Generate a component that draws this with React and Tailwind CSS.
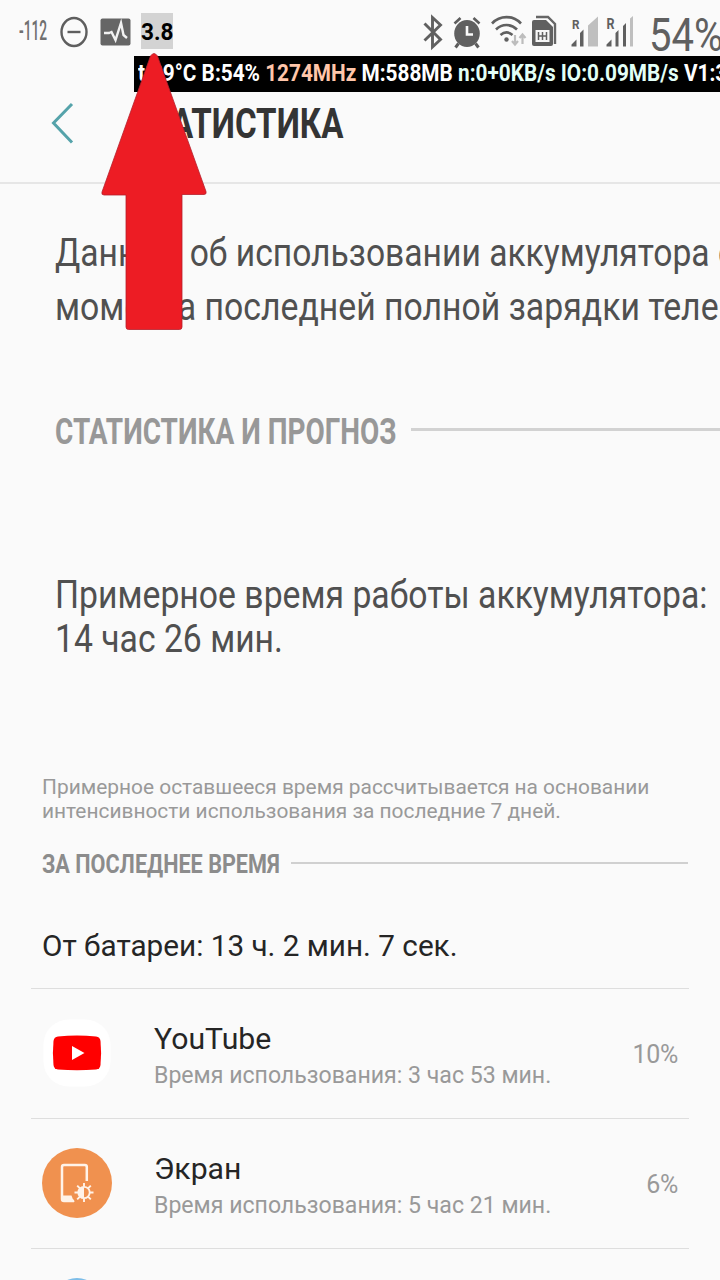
import React from "react";

function StatusIcons() {
  return (
    <div className="flex h-14 items-start">
      <span className="ml-[19px] mt-[17px] block w-[41px] shrink-0">
        <span className="inline-block origin-left scale-x-[0.51] whitespace-nowrap text-[27px] font-medium leading-[28px] text-[#707070]">-112</span>
      </span>
      <svg className="mt-[16px] h-8 w-7 shrink-0" viewBox="0 0 28 32" fill="none" stroke="#5e5e5e" strokeWidth="2.4">
        <ellipse cx="14" cy="16" rx="12.5" ry="14" />
        <path d="M7.5 16h13" />
      </svg>
      <svg className="ml-3 mt-[18px] h-7 w-[31px] shrink-0" viewBox="0 0 31 28">
        <rect x="0.5" y="0.5" width="30" height="27" rx="2" fill="#666" />
        <path d="M4 15h5l2.500-1 4 8 5.500-17 2.500 12 3.500 3" fill="none" stroke="#f2f2f2" strokeWidth="2.4" />
      </svg>
      <span className="ml-[10px] mt-[13px] flex h-9 w-8 shrink-0 items-center justify-center bg-[#d3d3d3]">
        <span className="mt-[2px] inline-block scale-x-[0.94] whitespace-nowrap text-[24px] font-bold text-black">3.8</span>
      </span>
      <svg className="ml-auto mt-[14px] h-[38px] w-[212px] shrink-0" viewBox="422 14 212 38" fill="none">
        <path d="M424.500 23.500l16 16-8 7.500V17.500l8 7.500-16 15.500" stroke="#606060" strokeWidth="2.9" />
        <path d="M454.5 23.500l6-5.500M479.500 23.500l-6-5.500" stroke="#5d5d5d" strokeWidth="2.600" />
        <path d="M458.500 43.500l-3 4M475.500 43.500l3 4" stroke="#5d5d5d" strokeWidth="3" />
        <ellipse cx="467" cy="33.500" rx="12.800" ry="13.500" fill="#606060" />
        <path d="M467 26v8.500h6" stroke="#fafafa" strokeWidth="2.600" />
        <path d="M492 23.500c8-8.500 21-8.500 29 0M496 29.500c6-6 15-6 21 0M500.500 35c4-3.500 8-3.500 12 0" stroke="#606060" strokeWidth="2.600" />
        <circle cx="506.500" cy="39.500" r="2.200" fill="#606060" />
        <path d="M515 35v9M512 41l3 3.500 3-3.500M522.500 44v-9M519.500 38l3-3.500 3 3.500" stroke="#bdbdbd" strokeWidth="2.200" />
        <path d="M536 17h12l7 7v20" stroke="#666" strokeWidth="2.400" />
        <path d="M534 20h12l7 7v17q0 2-2 2h-17q-2 0-2-2V22q0-2 2-2z" fill="#606060" />
        <path d="M535.500 30h14v12h-14z" fill="#f7f7f7" />
        <path d="M538.500 32v8M542.500 32v8M546.500 32v8M538 36h9" stroke="#606060" strokeWidth="1.500" />
        <path d="M571.500 46.500v-2l5-5v7zM580 33l3.500-3.500v17H580z" fill="#606060" />
        <path d="M588 25.500l10-9v30h-10z" fill="#bfbfbf" />
        <path d="M606.500 46.500v-2l5-5v7zM615.500 33l3-3v16.500h-3zM623 26l3-3v23.500h-3z" fill="#606060" />
        <path d="M630 18.500l3-2.500v30.500h-3z" fill="#bfbfbf" />
        <text x="572" y="29" fill="#606060" fontSize="13" fontWeight="700" textLength="7.500" lengthAdjust="spacingAndGlyphs">R</text>
        <text x="606.500" y="29" fill="#606060" fontSize="15" fontWeight="700" textLength="8" lengthAdjust="spacingAndGlyphs">R</text>
      </svg>
      <span className="ml-[15px] mt-[10px] w-[71px] shrink-0">
        <span className="inline-block origin-left scale-x-[0.87] whitespace-nowrap text-[46px] leading-[50px] text-[#606060]">54%</span>
      </span>
    </div>
  );
}

function ScreenIcon() {
  return (
    <svg className="h-[70px] w-[70px]" viewBox="0 0 70 70" fill="none">
      <circle cx="35" cy="35" r="35" fill="#f0914f" />
      <path d="M44.800 33V19q0-2-2-2H22q-2 0-2 2v32q0 2 2 2h10" stroke="#fff3e9" strokeWidth="2.500" />
      <path d="M20 47.500h9.500q.5 3 3.500 6H22q-2 0-2-2z" fill="#fff3e9" />
      <circle cx="42" cy="44.500" r="5.700" stroke="#fff3e9" strokeWidth="1.800" />
      <path d="M42 39v11a5.500 5.500 0 0 1 0-11z" fill="#fff3e9" />
      <path d="M42 35v3.500M42 50.500v3.500M32.500 44.500h3.500M48 44.500h3.500M35.200 37.700l2.500 2.500M46.300 48.800l2.500 2.500M35.200 51.300l2.500-2.500M46.300 40.200l2.500-2.500" stroke="#fff3e9" strokeWidth="1.900" />
    </svg>
  );
}

function YouTubeIcon() {
  return (
    <svg className="h-[70px] w-[70px]" viewBox="0 0 70 70">
      <rect x="1.500" y="1.500" width="67" height="67" rx="25" fill="#fff" />
      <path d="M16 18.500q19-1.800 38 0 4 .4 4.500 4.500 1.200 12 0 24-.5 4-4.500 4.500-19 1.600-38 0-4-.5-4.500-4.500-1.200-12 0-24 .5-4.100 4.500-4.500z" fill="red" />
      <path d="M30 28v14l12.500-7z" fill="#fff" />
    </svg>
  );
}

function UsageRow({ icon, name, detail, percent }) {
  return (
    <div className="ml-[31px] flex h-[130px] w-[658px] items-center border-b border-[#dedede] pr-[11px]">
      <div className="mb-[2px] ml-[11px] w-[112px] shrink-0">{icon}</div>
      <div className="mt-[6px] flex-1">
        <div className="whitespace-nowrap text-[30.2px] leading-[38px] text-[#252525]">{name}</div>
        <div className="whitespace-nowrap text-[23.1px] leading-[35px] text-[#999]">{detail}</div>
      </div>
      <div className="mt-[3px] text-[25px] tracking-[-0.3px] text-[#999]">{percent}</div>
    </div>
  );
}

export default function App() {
  return (
    <div className="relative h-[1280px] w-[720px] overflow-hidden bg-[#fafafa] font-['Roboto',sans-serif]">
      <StatusIcons />
      <div className="ml-[134px] h-[36px] overflow-hidden bg-black pl-[4px]">
        <div className="inline-block origin-left scale-x-[0.904] whitespace-nowrap text-[23px] font-bold leading-[36px] text-white">
          t:39°C B:54% <span className="text-[#ffc6aa]">1274MHz</span> M:588MB <span className="text-[#e2fff6]">n:0+0KB/s</span> <span className="text-[#e2fff6]">IO:0.09MB/s</span> V1:3
        </div>
      </div>
      <div className="flex h-[92px] items-start border-b-2 border-[#e6e6e6]">
        <svg className="ml-[51px] mt-[9px] h-[44px] w-[23px] shrink-0" viewBox="0 0 23 44" fill="none" stroke="#55a3aa" strokeWidth="3">
          <path d="M21 3L2.500 22 21 41.500" />
        </svg>
        <h1 className="ml-[57px] mt-[6px] origin-left scale-x-[0.77] whitespace-nowrap text-[43px] font-bold leading-[50px] text-[#343434]">СТАТИСТИКА</h1>
      </div>

      <div className="ml-[55px] mt-[42px] whitespace-nowrap text-[38px] leading-[54px] text-[#505050]">
        <div className="w-max origin-left scale-x-[0.885]">Данные об использовании аккумулятора с</div>
        <div className="w-max origin-left scale-x-[0.889]">момента последней полной зарядки теле</div>
      </div>

      <div className="ml-[55px] mt-[78px] flex h-10 items-center">
        <h2 className="w-[356px] shrink-0 whitespace-nowrap text-[36px] font-bold leading-10 text-[#989898]">
          <span className="inline-block origin-left scale-x-[0.776]">СТАТИСТИКА И ПРОГНОЗ</span>
        </h2>
        <div className="-mt-[5px] h-[3px] flex-1 bg-[#d2d2d2]" />
      </div>

      <div className="ml-[55px] mt-[121px] whitespace-nowrap text-[38px] leading-[44px] text-[#505050]">
        <div className="w-max origin-left scale-x-[0.888]">Примерное время работы аккумулятора:</div>
        <div className="w-max origin-left scale-x-[0.887]">14 час 26 мин.</div>
      </div>

      <p className="ml-[42px] mt-[114px] whitespace-nowrap text-[20.9px] leading-6 text-[#999]">
        Примерное оставшееся время рассчитывается на основании<br />
        интенсивности использования за последние 7 дней.
      </p>

      <div className="ml-[42px] mr-8 mt-[27px] flex h-[30px] items-center">
        <h2 className="w-[249px] shrink-0 whitespace-nowrap text-[25px] font-bold leading-[30px] text-[#8c8c8c]">
          <span className="inline-block origin-left scale-x-[0.865]">ЗА ПОСЛЕДНЕЕ ВРЕМЯ</span>
        </h2>
        <div className="-mt-[4px] h-[2px] flex-1 bg-[#d0d0d0]" />
      </div>

      <div className="ml-[31px] mt-[46px] h-[63px] w-[658px] whitespace-nowrap border-b border-[#dedede] pl-[11px] text-[29.7px] leading-[40px] text-[#252525]">
        От батареи: 13 ч. 2 мин. 7 сек.
      </div>

      <UsageRow icon={<YouTubeIcon />} name="YouTube" detail="Время использования: 3 час 53 мин." percent="10%" />
      <UsageRow icon={<ScreenIcon />} name="Экран" detail="Время использования: 5 час 21 мин." percent="6%" />
      <div className="ml-[53px] mt-[29px] h-12 w-12 rounded-full bg-[#7dbde8]" />

      <svg className="absolute left-[100px] top-[50px] h-[284px] w-[110px]" viewBox="100 50 110 284">
        <path d="M150.500 56q3.500-5 7 0L206 191.500q.8 3-2 3h-22V327q0 2.500-2.500 2.500h-51q-2.500 0-2.500-2.500V195h-22q-2.800 0-2-3z" fill="#ed1c24" stroke="#b51f2c" strokeWidth="0.800" />
      </svg>
    </div>
  );
}
